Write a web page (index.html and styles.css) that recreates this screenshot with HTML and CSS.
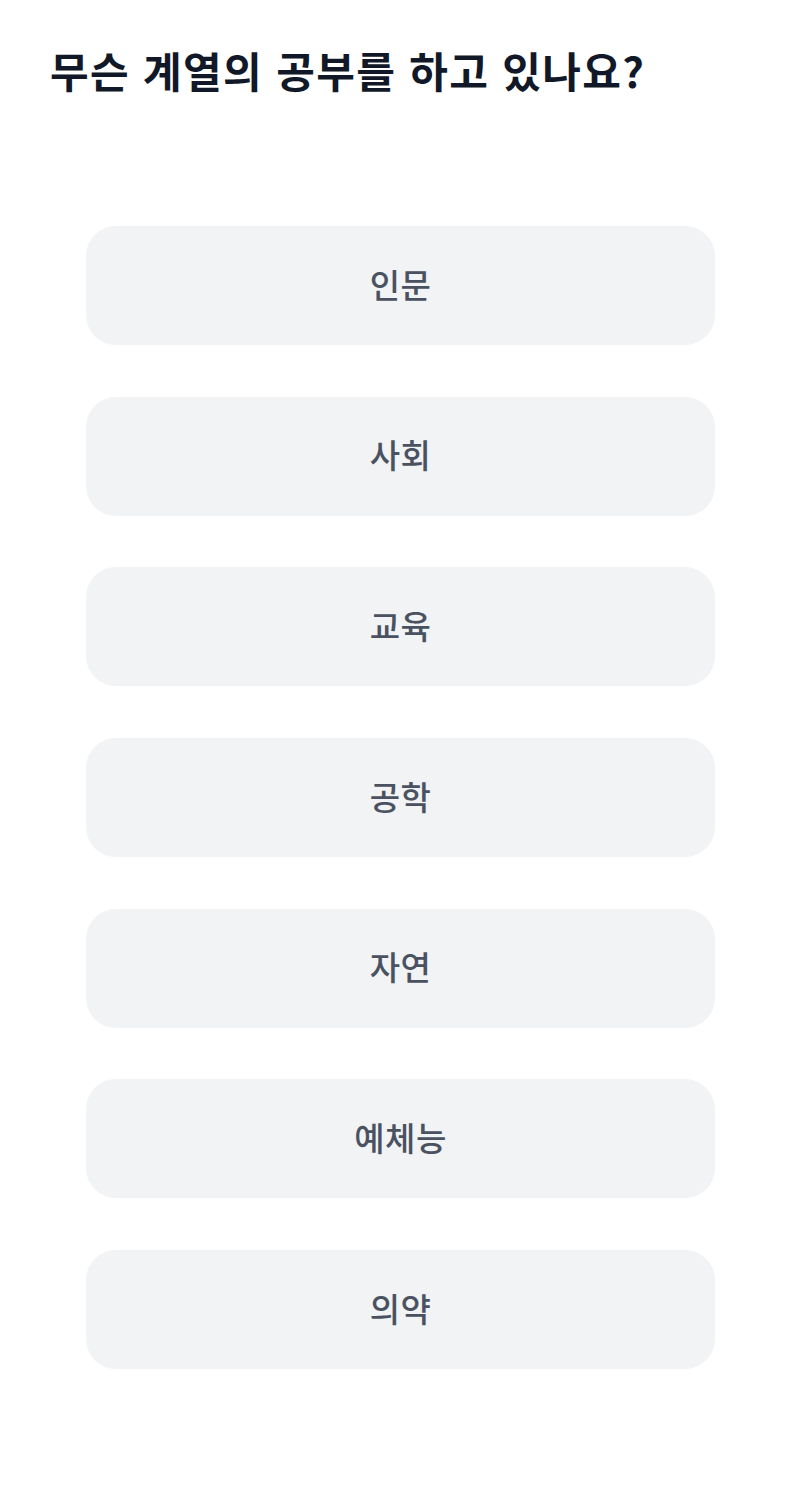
FILE: index.html
```html
<!DOCTYPE html>
<html lang="ko">
<head>
    <meta charset="UTF-8">
    <meta name="viewport" content="width=device-width, initial-scale=1.0">
    <title>계열 선택</title>
    <link rel="stylesheet" href="styles.css">
</head>
<body>
    <div id="container">
        <h1 class="question">무슨 계열의 공부를 하고 있나요?</h1>

        <div class="choice-list">
            <button class="choice" type="button">인문</button>
            <button class="choice" type="button">사회</button>
            <button class="choice" type="button">교육</button>
            <button class="choice" type="button">공학</button>
            <button class="choice" type="button">자연</button>
            <button class="choice" type="button">예체능</button>
            <button class="choice" type="button">의약</button>
        </div>
    </div>
</body>
</html>
```

FILE: styles.css
```css
body {
    font-family: "Noto Sans CJK KR", "Noto Sans", sans-serif;
    background: #ffffff;
    margin: 0;
    padding: 0;
}

#container {
    width: 800px;
    min-height: 1499px;
    box-sizing: border-box;
    padding: 37px 0 0 0;
}

.question {
    margin: 0 0 0 50px;
    font-size: 42px;
    font-weight: 700;
    line-height: 66px;
    color: #111827;
    letter-spacing: 1.35px;
}

.choice-list {
    display: flex;
    flex-direction: column;
    gap: 51.7px;
    margin-top: 123px;
    padding: 0 85px 0 86px;
}

.choice {
    height: 119px;
    padding: 0 0 4px 0;
    border: none;
    border-radius: 30px;
    background-color: #f2f3f5;
    color: #4a5261;
    font-family: inherit;
    font-size: 33px;
    font-weight: 500;
    letter-spacing: 0.5px;
    cursor: pointer;
}
```
